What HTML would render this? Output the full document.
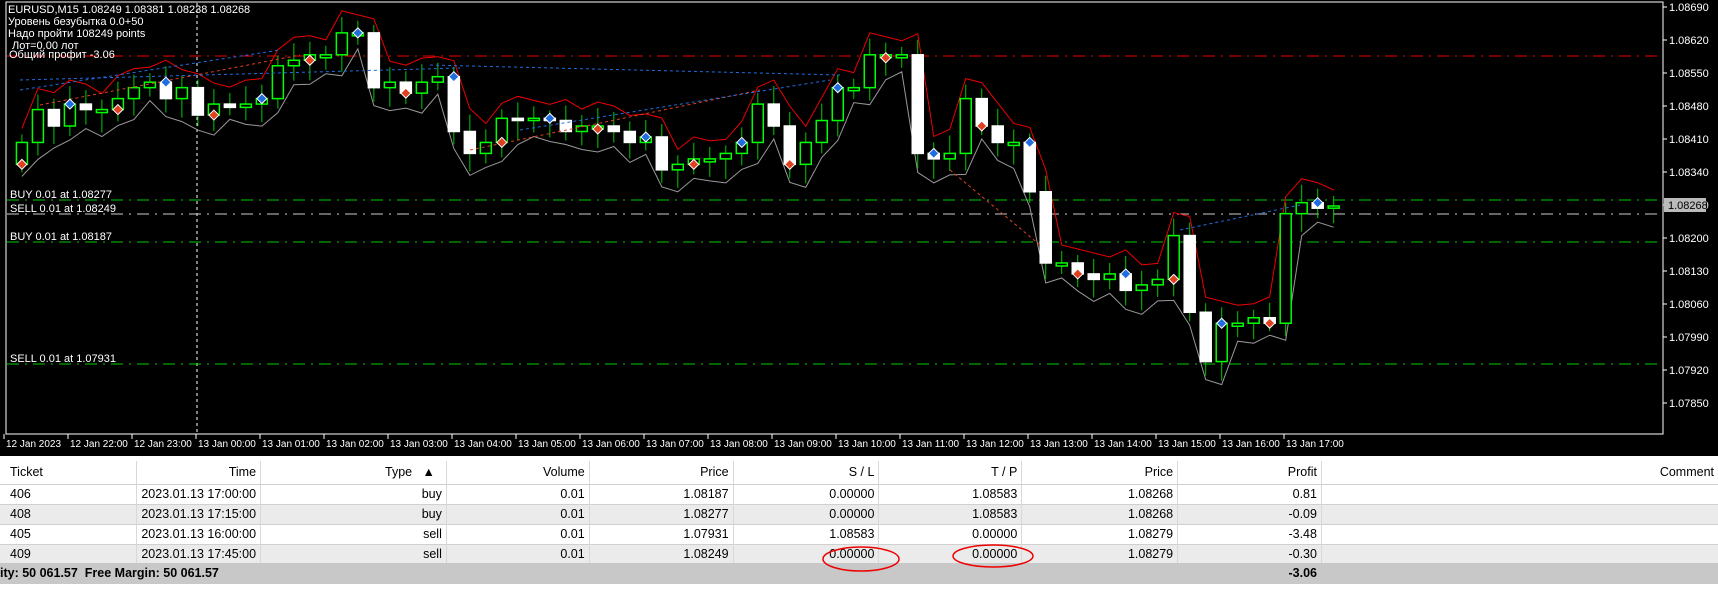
<!DOCTYPE html>
<html><head><meta charset="utf-8">
<style>
*{margin:0;padding:0;box-sizing:border-box}
body{width:1718px;height:593px;background:#fff;overflow:hidden;font-family:"Liberation Sans",sans-serif;position:relative}
#chart{position:absolute;left:0;top:0;width:1718px;height:456px;background:#000}
table{position:absolute;left:0;top:461px;border-collapse:collapse;font-size:12.5px;font-family:"Liberation Sans",sans-serif}
td{height:20px;padding:0 4px;border-right:1px solid #d8d8d8;white-space:nowrap;text-align:right}
td:first-child{text-align:left;padding-left:10px}
tr.h td{background:#fff;height:23px}
tr.g td{background:#ebebeb}
tr.w td{background:#fff}
tr{border-bottom:1px solid #d0d0d0}
</style></head><body>
<div id="chart">
<svg id="sv" width="1718" height="456" xmlns="http://www.w3.org/2000/svg" style="position:absolute;left:0;top:0">
<rect x="6" y="2" width="1657" height="432" fill="none" stroke="#fff" stroke-width="1"/>
<line x1="197" y1="3" x2="197" y2="434" stroke="#fff" stroke-dasharray="3,3"/>
<line x1="7" y1="56" x2="1663" y2="56" stroke="#e00" stroke-dasharray="12,6,2,6"/>
<line x1="7" y1="200" x2="1663" y2="200" stroke="#0c0" stroke-dasharray="12,6,2,6"/>
<line x1="7" y1="214" x2="1663" y2="214" stroke="#ccc" stroke-dasharray="12,6,2,6"/>
<line x1="7" y1="242" x2="1663" y2="242" stroke="#0c0" stroke-dasharray="12,6,2,6"/>
<line x1="7" y1="364" x2="1663" y2="364" stroke="#0c0" stroke-dasharray="12,6,2,6"/>
<g id="cd"></g>
<g font-family="Liberation Sans" font-size="11" fill="#fff">
<text x="8" y="13">EURUSD,M15  1.08249 1.08381 1.08238 1.08268</text>
<text x="8" y="25">Уровень безубытка 0.0+50</text>
<text x="8" y="37">Надо пройти  108249 points</text>
<text x="12" y="49">Лот=0.00 лот</text>
<text x="9" y="58">Общий профит -3.06</text>
<text x="10" y="198">BUY 0.01 at 1.08277</text>
<text x="10" y="212">SELL 0.01 at 1.08249</text>
<text x="10" y="240">BUY 0.01 at 1.08187</text>
<text x="10" y="362">SELL 0.01 at 1.07931</text>
</g>
<g id="ax" font-family="Liberation Sans" font-size="11" fill="#fff"></g>
<rect x="1664" y="198" width="42" height="14" fill="#bbb"/>
<text x="1668" y="209" font-family="Liberation Sans" font-size="11" fill="#000">1.08268</text>
</svg>
</div>
<table>
<tr class="h"><td style="width:137px">Ticket</td><td style="width:122px">Time</td><td style="width:186px">Type &nbsp;&nbsp;▲&nbsp;&nbsp;</td><td style="width:143px">Volume</td><td style="width:144px">Price</td><td style="width:146px">S / L</td><td style="width:143px">T / P</td><td style="width:156px">Price</td><td style="width:144px">Profit</td><td style="width:397px;border-right:none">Comment</td></tr>
<tr class="w"><td>406</td><td>2023.01.13 17:00:00</td><td>buy</td><td>0.01</td><td>1.08187</td><td>0.00000</td><td>1.08583</td><td>1.08268</td><td>0.81</td><td style="border-right:none"></td></tr>
<tr class="g"><td>408</td><td>2023.01.13 17:15:00</td><td>buy</td><td>0.01</td><td>1.08277</td><td>0.00000</td><td>1.08583</td><td>1.08268</td><td>-0.09</td><td style="border-right:none"></td></tr>
<tr class="w"><td>405</td><td>2023.01.13 16:00:00</td><td>sell</td><td>0.01</td><td>1.07931</td><td>1.08583</td><td>0.00000</td><td>1.08279</td><td>-3.48</td><td style="border-right:none"></td></tr>
<tr class="g"><td>409</td><td>2023.01.13 17:45:00</td><td>sell</td><td>0.01</td><td>1.08249</td><td>0.00000</td><td>0.00000</td><td>1.08279</td><td>-0.30</td><td style="border-right:none"></td></tr>
</table>
<div style="position:absolute;left:0;top:563px;width:1718px;height:21px;background:#c8c8c8;font-size:12.5px;font-weight:bold;line-height:21px">
<span style="position:absolute;left:0">ity: 50 061.57&nbsp; Free Margin: 50 061.57</span>
<span style="position:absolute;right:401px">-3.06</span></div>
<svg width="1718" height="593" style="position:absolute;left:0;top:0;pointer-events:none">
<ellipse cx="861" cy="559" rx="38" ry="12" fill="none" stroke="#e00" stroke-width="1.5"/>
<ellipse cx="993" cy="556" rx="40" ry="11" fill="none" stroke="#e00" stroke-width="1.5"/>
</svg>
<script>
var S=1.0957;
var c=[130,100,115,95,100,100,90,80,75,90,80,105,95,98,95,90,60,55,50,50,30,30,80,75,85,75,70,120,140,130,108,110,108,110,120,115,115,120,130,125,155,150,145,145,140,130,95,115,150,130,110,80,80,50,50,50,140,145,140,90,115,130,130,175,240,240,250,255,250,265,260,255,215,285,330,295,295,290,295,195,185,190,188];
var g=document.getElementById('cd'),h='',up=[],lo=[],mk='';
for(var i=0;i<c.length;i++){var x=(20+i*14.6)*S,o=(i?c[i-1]:c[0]+20)*S,cl=c[i]*S;
var t=Math.min(o,cl),b=Math.max(o,cl);if(b-t<2){b=t+3;}
var hi=t-8-(i*7%11),lw=b+8+(i*5%13);
h+='<line x1="'+x+'" y1="'+hi+'" x2="'+x+'" y2="'+lw+'" stroke="#0c0"/>';
var dn=cl>o;
h+='<rect x="'+(x-5.5)+'" y="'+t+'" width="11" height="'+(b-t)+'" fill="'+(dn?'#fff':'#000')+'" stroke="'+(dn?'#fff':'#0f0')+'" stroke-width="1.5"/>';
if(i%3==0){var my=(i%2?t:b);mk+='<path d="M'+x+' '+(my-5)+'l5 5l-5 5l-5-5z" fill="'+(i%2?'#1e6ee0':'#e04020')+'" stroke="#fff" stroke-width="1"/>';}
up.push(x+','+(hi-6));lo.push(x+','+(lw+4));}
h='<polyline points="'+up.join(' ')+'" fill="none" stroke="#e00"/><polyline points="'+lo.join(' ')+'" fill="none" stroke="#999"/>'+h;
h+='<g stroke-dasharray="3,3" fill="none"><line x1="20" y1="90" x2="280" y2="50" stroke="#1e6ee0"/><line x1="40" y1="105" x2="300" y2="55" stroke="#e04020"/><line x1="20" y1="80" x2="460" y2="68" stroke="#1e6ee0"/><line x1="470" y1="150" x2="760" y2="90" stroke="#e04020"/><line x1="520" y1="130" x2="830" y2="80" stroke="#1e6ee0"/><line x1="950" y1="170" x2="1040" y2="245" stroke="#e04020"/><line x1="1180" y1="230" x2="1300" y2="205" stroke="#1e6ee0"/><line x1="430" y1="65" x2="840" y2="75" stroke="#1e6ee0"/></g>';
g.innerHTML=h+mk;
var a='';for(var k=0;k<13;k++){var y=7+k*33,p=(1.08690-k*0.0007).toFixed(5);a+='<line x1="1663" y1="'+y+'" x2="1667" y2="'+y+'" stroke="#fff"/><text x="1669" y="'+(y+4)+'">'+p+'</text>';}
a+='<line x1="1663" y1="2" x2="1663" y2="434" stroke="#fff"/>';
var tl=['12 Jan 2023','12 Jan 22:00','12 Jan 23:00','13 Jan 00:00','13 Jan 01:00','13 Jan 02:00','13 Jan 03:00','13 Jan 04:00','13 Jan 05:00','13 Jan 06:00','13 Jan 07:00','13 Jan 08:00','13 Jan 09:00','13 Jan 10:00','13 Jan 11:00','13 Jan 12:00','13 Jan 13:00','13 Jan 14:00','13 Jan 15:00','13 Jan 16:00','13 Jan 17:00'];
for(var j=0;j<tl.length;j++){var x=4+j*64;a+='<line x1="'+x+'" y1="434" x2="'+x+'" y2="439" stroke="#fff"/><text x="'+(x+2)+'" y="447" font-size="10">'+tl[j]+'</text>';}
document.getElementById('ax').innerHTML=a;
</script>
</body></html>
